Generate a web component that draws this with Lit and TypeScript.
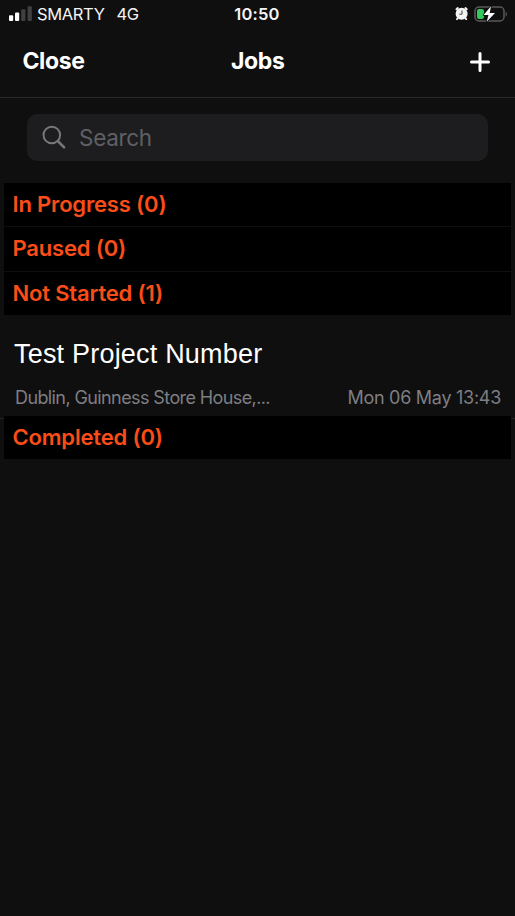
import { LitElement, html, css } from "lit";
import { customElement, property } from "lit/decorators.js";

@customElement("status-bar")
class StatusBar extends LitElement {
  static styles = css`
    :host { display: grid; grid-template-columns: 1fr auto 1fr; align-items: center; height: 28px; padding: 0 7px 0 9px; color: #f4f4f4; }
    svg { display: block; }
    .left { display: flex; align-items: center; font-size: 16.5px; line-height: 28px; }
    .signal { margin: 0 5px 1px 0; }
    .carrier { letter-spacing: -0.35px; margin-right: 12px; }
    .network { letter-spacing: -0.4px; }
    .time { font-size: 16.5px; font-weight: 600; letter-spacing: 0.2px; line-height: 28px; margin-right: 3px; }
    .right { display: flex; justify-content: flex-end; align-items: center; gap: 5px; }
    .alarm, .battery { margin-bottom: 1px; }
  `;
  render() {
    return html`
      <div class="left">
        <svg class="signal" width="23" height="16" viewBox="0 0 23 16">
          <rect x="0" y="9.2" width="4.2" height="5.8" rx="1" fill="#fff" />
          <rect x="6" y="6.5" width="4.2" height="8.5" rx="1" fill="#fff" />
          <rect x="12.2" y="3.2" width="4.2" height="11.8" rx="1" fill="#404041" />
          <rect x="18.6" y="0.2" width="4.2" height="14.8" rx="1" fill="#404041" />
        </svg>
        <span class="carrier">SMARTY</span><span class="network">4G</span>
      </div>
      <div class="time">10:50</div>
      <div class="right">
        <svg class="alarm" width="14" height="15" viewBox="0 0 14 15">
          <circle cx="6.6" cy="7.7" r="6" fill="#f4f4f4" />
          <path d="M1.5 3.3 2.8 2.1M11.7 3.3 10.4 2.1M2.6 12.5 2 13.1M10.6 12.5l.6.6" stroke="#f4f4f4" stroke-width="2" stroke-linecap="round" />
          <path d="M7 4.4v3.8H4.3" fill="none" stroke="#444" stroke-width="1" />
        </svg>
        <svg class="battery" width="34" height="18" viewBox="0 0 34 18">
          <rect x="1" y="2" width="29" height="14" rx="4" fill="none" stroke="#59595b" stroke-width="1.5" />
          <path d="M31.7 6.4c1.6.7 1.6 4.5 0 5.2z" fill="#59595b" />
          <rect x="3" y="4" width="7" height="10" rx="2" fill="#34c759" />
          <path d="M17 1.3 9.6 10h4.9l-1.8 6.8L21 8h-5.3z" fill="#fff" stroke="#0f0f0f" stroke-width="1.6" paint-order="stroke" stroke-linejoin="round" />
        </svg>
      </div>
    `;
  }
}

@customElement("job-section")
class JobSection extends LitElement {
  @property() label = "";
  @property({ type: Number }) count = 0;
  static styles = css`
    :host { display: block; box-sizing: border-box; height: 43px; margin: 0 4px; padding-left: 8.5px; background: #000; color: #fb4d17; font-size: 22px; font-weight: 600; line-height: 42px; letter-spacing: -0.18px; white-space: pre; }
  `;
  render() {
    return html`${this.label} (${this.count})`;
  }
}

@customElement("app-root")
class AppRoot extends LitElement {
  static styles = css`
    :host { display: flex; flex-direction: column; height: 916px; overflow: hidden; background: #0f0f0f; color: #fff; font-family: Inter, "Liberation Sans", sans-serif; }
    svg { display: block; }
    .nav { display: grid; grid-template-columns: 1fr auto 1fr; align-items: center; height: 69px; padding: 0 25px 0 22.5px; border-bottom: 1px solid #2a2a2b; font-size: 23px; font-weight: 700; letter-spacing: -0.4px; }
    .close, .heading { line-height: 67px; height: 69px; }
    .heading { padding-left: 3px; }
    .plus { justify-self: end; margin-bottom: 2px; }
    .search { display: flex; align-items: center; box-sizing: border-box; height: 47px; margin: 16px 27px 22px; padding-left: 15px; border-radius: 10px; background: #1d1d1f; color: #606064; font-size: 22.5px; letter-spacing: -0.3px; }
    .glass { margin-right: 12px; }
    .sections { display: flex; flex-direction: column; padding-bottom: 1px; }
    .sections job-section + job-section { border-top: 1px solid #0f0f0f; height: 44.5px; }
    .job { box-sizing: border-box; height: 100px; padding: 20px 14px 0; }
    .title { font-family: "Liberation Sans", sans-serif; font-size: 27px; line-height: 36px; letter-spacing: 0.2px; }
    .meta { display: flex; justify-content: space-between; margin-top: 14px; padding-left: 1px; color: #7e7e83; font-size: 18px; line-height: 24px; letter-spacing: -0.6px; }
    .date { letter-spacing: -0.28px; }
    .last { background: linear-gradient(#232324, #232324) 0 2px / 100% 1px no-repeat; }
  `;
  render() {
    return html`
      <status-bar></status-bar>
      <div class="nav">
        <span class="close">Close</span>
        <span class="heading">Jobs</span>
        <svg class="plus" width="20" height="20" viewBox="0 0 20 20">
          <path d="M10 1.5v17M1.5 10h17" stroke="#fff" stroke-width="3" stroke-linecap="round" />
        </svg>
      </div>
      <div class="search">
        <svg class="glass" width="25" height="25" viewBox="0 0 25 25">
          <circle cx="9.8" cy="10" r="8.3" fill="none" stroke="#77777b" stroke-width="2" />
          <path d="m15.8 16 6.3 6.3" stroke="#77777b" stroke-width="2.5" stroke-linecap="round" />
        </svg>
        <span>Search</span>
      </div>
      <div class="sections">
        <job-section label="In Progress" count="0"></job-section>
        <job-section label="Paused" count="0"></job-section>
        <job-section label="Not Started" count="1"></job-section>
      </div>
      <div class="job">
        <div class="title">Test Project Number</div>
        <div class="meta"><span>Dublin, Guinness Store House,...</span><span class="date">Mon 06 May 13:43</span></div>
      </div>
      <div class="last"><job-section label="Completed" count="0"></job-section></div>
    `;
  }
}
